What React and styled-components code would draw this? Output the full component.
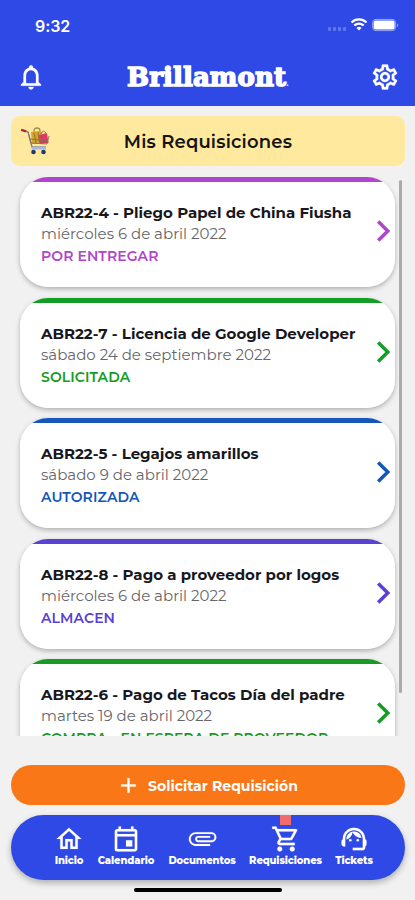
import React from "react";
import styled, { createGlobalStyle } from "styled-components";
import {
  MdNotificationsNone,
  MdOutlineSettings,
  MdOutlineHome,
  MdOutlineEvent,
  MdOutlineAttachment,
  MdOutlineShoppingCart,
  MdOutlineSupportAgent,
  MdAdd,
} from "react-icons/md";

const GlobalStyle = createGlobalStyle`
  * { box-sizing: border-box; }
  body {
    margin: 0;
    background: #f1f1f1;
    font-family: Montserrat, Inter, "Liberation Sans", sans-serif;
  }
  /* the md icons carry an empty frame path, keep it invisible */
  svg path[fill="none"][d^="M0 0h24"] { stroke: none; }
`;

const Screen = styled.div`
  width: 415px;
  height: 900px;
  display: flex;
  flex-direction: column;
  overflow: hidden;
  background: #f1f1f1;
`;

const Header = styled.header`
  height: 106px;
  flex: none;
  background: #2f49e6;
  color: #fff;
`;

const StatusBar = styled.div`
  height: 50px;
  padding: 0 15px 0 35px;
  display: flex;
  align-items: center;
  justify-content: space-between;
`;

const Clock = styled.span`
  padding-top: 1px;
  font-family: Inter, sans-serif;
  font-size: 16px;
  font-weight: 600;
  letter-spacing: -0.1px;
`;

const Signals = styled.div`
  display: flex;
  align-items: center;
`;

const TitleBar = styled.div`
  height: 54px;
  padding: 0 15px 0 16px;
  display: flex;
  align-items: center;
  justify-content: space-between;

  > svg {
    stroke: currentColor;
    stroke-width: 0.2px;
  }
`;

const Logo = styled.div`
  padding-top: 6px;
  font-family: "DejaVu Serif", serif;
  font-size: 26px;
  font-weight: 700;
  line-height: 28px;
  letter-spacing: 0.1px;
  white-space: nowrap;
  -webkit-text-stroke: 1.5px #fff;

  small {
    font-size: 8px;
    -webkit-text-stroke: 0;
  }
`;

const Banner = styled.div`
  height: 50px;
  flex: none;
  margin: 10px 10px 0 11px;
  padding: 0 10px;
  border-radius: 9px;
  background: #ffe99f;
  display: grid;
  grid-template-columns: 32px 1fr 32px;
  align-items: center;
`;

const BannerTitle = styled.h1`
  margin: 0;
  padding-top: 1px;
  color: #141414;
  font-size: 18px;
  font-weight: 600;
  letter-spacing: 0.18px;
  text-align: center;
  white-space: nowrap;
`;

const ListArea = styled.div`
  height: 560px;
  flex: none;
  margin-top: 10px;
  padding: 1px 13px 0 11px;
  display: flex;
  overflow: hidden;
`;

const List = styled.div`
  width: 388px;
  flex: none;
  padding: 0 4px 0 9px;
  overflow: hidden;
`;

const ScrollThumb = styled.div`
  width: 3px;
  height: 513px;
  flex: none;
  margin-top: 3px;
  border-radius: 2px;
  background: #ababab;
`;

const Card = styled.article`
  height: 110px;
  margin-bottom: 10.6px;
  padding: 25px 4px 0 21px;
  border-radius: 28px;
  background: linear-gradient(${(p) => p.$color} 4.6px, #fff 5px);
  box-shadow: 0 2px 5px rgba(0, 0, 0, 0.28);
  color: ${(p) => p.$color};
  display: flex;
  justify-content: space-between;
`;

const CardTitle = styled.div`
  color: #17171c;
  font-size: 15px;
  font-weight: 700;
  line-height: 21px;
  white-space: nowrap;
`;

const CardDate = styled.div`
  color: #66666a;
  font-size: 15px;
  font-weight: 400;
  line-height: 22px;
  white-space: nowrap;
`;

const CardStatus = styled.div`
  font-size: 14px;
  font-weight: 600;
  line-height: 22px;
  letter-spacing: 0.1px;
  white-space: nowrap;
`;

const Chevron = styled.svg`
  width: 15px;
  height: 24px;
  flex: none;
  margin-top: 17px;
  fill: none;
  stroke: currentColor;
  stroke-width: 3.5;
`;

const RequestButton = styled.button`
  height: 40px;
  flex: none;
  margin: 29px 10px 0 11px;
  padding: 1px 2px 0 0;
  border: 0;
  border-radius: 20px;
  background: #fa7717;
  color: #fff;
  font-family: inherit;
  font-size: 14px;
  font-weight: 700;
  letter-spacing: 0.05px;
  display: flex;
  align-items: center;
  justify-content: center;
  gap: 7px;

  > svg {
    stroke: currentColor;
    stroke-width: 0.3px;
  }
`;

const TabBar = styled.nav`
  height: 65px;
  flex: none;
  margin: 10px 10px 0 11px;
  border-radius: 33px;
  background: #2f49e6;
  box-shadow: 0 3px 6px rgba(0, 0, 0, 0.28);
  display: flex;
  justify-content: center;
  gap: 13px;
  padding-left: 11px;
`;

const Tab = styled.div`
  position: relative;
  width: ${(p) => p.$width}px;
  padding-top: 9px;
  color: #fff;
  display: flex;
  flex-direction: column;
  align-items: center;

  > svg {
    stroke: currentColor;
    stroke-width: 0.1px;
  }
`;

const TabLabel = styled.span`
  font-size: 10px;
  font-weight: 800;
  line-height: 14px;
  letter-spacing: -0.1px;
  white-space: nowrap;
`;

const Badge = styled.span`
  position: absolute;
  top: 0;
  left: 31px;
  width: 11px;
  height: 10px;
  background: #f16d6d;
`;

const HomeIndicator = styled.div`
  width: 148px;
  height: 4px;
  flex: none;
  margin: 8px auto 0;
  border-radius: 2px;
  background: #000;
`;

const requisitions = [
  { title: "ABR22-4 - Pliego Papel de China Fiusha", date: "miércoles 6 de abril 2022", status: "POR ENTREGAR", color: "#b045cb" },
  { title: "ABR22-7 - Licencia de Google Developer", date: "sábado 24 de septiembre 2022", status: "SOLICITADA", color: "#149c24" },
  { title: "ABR22-5 - Legajos amarillos", date: "sábado 9 de abril 2022", status: "AUTORIZADA", color: "#1557b7" },
  { title: "ABR22-8 - Pago a proveedor por logos", date: "miércoles 6 de abril 2022", status: "ALMACEN", color: "#5a40d3" },
  { title: "ABR22-6 - Pago de Tacos Día del padre", date: "martes 19 de abril 2022", status: "COMPRA - EN ESPERA DE PROVEEDOR", color: "#149c24" },
];

const tabs = [
  { label: "Inicio", icon: MdOutlineHome, width: 30 },
  { label: "Calendario", icon: MdOutlineEvent, width: 58 },
  { label: "Documentos", icon: MdOutlineAttachment, width: 68 },
  { label: "Requisiciones", icon: MdOutlineShoppingCart, width: 73, badge: true },
  { label: "Tickets", icon: MdOutlineSupportAgent, width: 38 },
];

function StatusIcons() {
  return (
    <Signals>
      <svg width="78" height="16" viewBox="0 0 78 16">
        <g fill="#6276ee">
          <rect x="6" y="10" width="3" height="4" rx="1" />
          <rect x="11" y="10" width="3" height="4" rx="1" />
          <rect x="16" y="10" width="3" height="4" rx="1" />
          <rect x="21" y="10" width="3" height="4" rx="1" />
        </g>
        <g fill="none" stroke="#fff" strokeWidth="2.2">
          <path d="M29.5 5.6a10.5 10.5 0 0 1 15 0" />
          <path d="M32.3 8.6a6.6 6.6 0 0 1 9.4 0" />
        </g>
        <path d="M34.5 10.9a3.6 3.6 0 0 1 5 0L37 13.5z" fill="#fff" />
        <rect x="50.6" y="2.4" width="23" height="11.2" rx="3.4" fill="none" stroke="#98a5f5" strokeWidth="1" />
        <rect x="51.6" y="3.4" width="21" height="9.2" rx="2" fill="#fff" />
        <path d="M75 6.2q2.4 1.8 0 4z" fill="#98a5f5" />
      </svg>
    </Signals>
  );
}

function CartPicture() {
  return (
    <svg width="30" height="30" viewBox="0 0 30 30">
      <path d="M13 9V5q0-3 3-3 3 0 3 3v4" fill="none" stroke="#a8894c" strokeWidth="1.3" />
      <path d="M10 6l10-1 1 12-10 1z" fill="#d5a22c" />
      <path d="M13 7l2 9m2-10l1 10" stroke="#8d6b24" strokeWidth="0.8" />
      <path d="M18 9l8-2 1.5 10-9 1z" fill="#d93962" />
      <path d="M20 8q2-5 5-1" fill="none" stroke="#8f6a55" strokeWidth="1" />
      <path d="M2 4l5 2 4 15h14" fill="none" stroke="#817c78" strokeWidth="1.4" />
      <path d="M8 9l2 8 16 1 2-8M9 13l18 2M14 12l1 6m6-5v5" fill="none" stroke="#85734f" strokeWidth="0.9" />
      <path d="M0 3.8l5 1.5" stroke="#bb2445" strokeWidth="2.4" />
      <path d="M10 20.5h15v3H11z" fill="#aab7dd" />
      <circle cx="12.5" cy="26" r="2.3" fill="#26356d" />
      <circle cx="22.5" cy="26" r="2.3" fill="#26356d" />
    </svg>
  );
}

function Requisition({ item }) {
  return (
    <Card $color={item.color}>
      <div>
        <CardTitle>{item.title}</CardTitle>
        <CardDate>{item.date}</CardDate>
        <CardStatus>{item.status}</CardStatus>
      </div>
      <Chevron viewBox="0 0 15 24">
        <path d="M2.2 2.4l9.6 9.6-9.6 9.6" />
      </Chevron>
    </Card>
  );
}

function App() {
  return (
    <Screen>
      <GlobalStyle />
      <Header>
        <StatusBar>
          <Clock>9:32</Clock>
          <StatusIcons />
        </StatusBar>
        <TitleBar>
          <MdNotificationsNone size={30} />
          <Logo>Brillamont<small>.</small></Logo>
          <MdOutlineSettings size={30} />
        </TitleBar>
      </Header>
      <Banner>
        <CartPicture />
        <BannerTitle>Mis Requisiciones</BannerTitle>
      </Banner>
      <ListArea>
        <List>
          {requisitions.map((item) => (
            <Requisition key={item.title} item={item} />
          ))}
        </List>
        <ScrollThumb />
      </ListArea>
      <RequestButton>
        <MdAdd size={25} />
        Solicitar Requisición
      </RequestButton>
      <TabBar>
        {tabs.map(({ label, icon: Icon, width, badge }) => (
          <Tab key={label} $width={width}>
            {badge && <Badge />}
            <Icon size={30} />
            <TabLabel>{label}</TabLabel>
          </Tab>
        ))}
      </TabBar>
      <HomeIndicator />
    </Screen>
  );
}

export default App;
